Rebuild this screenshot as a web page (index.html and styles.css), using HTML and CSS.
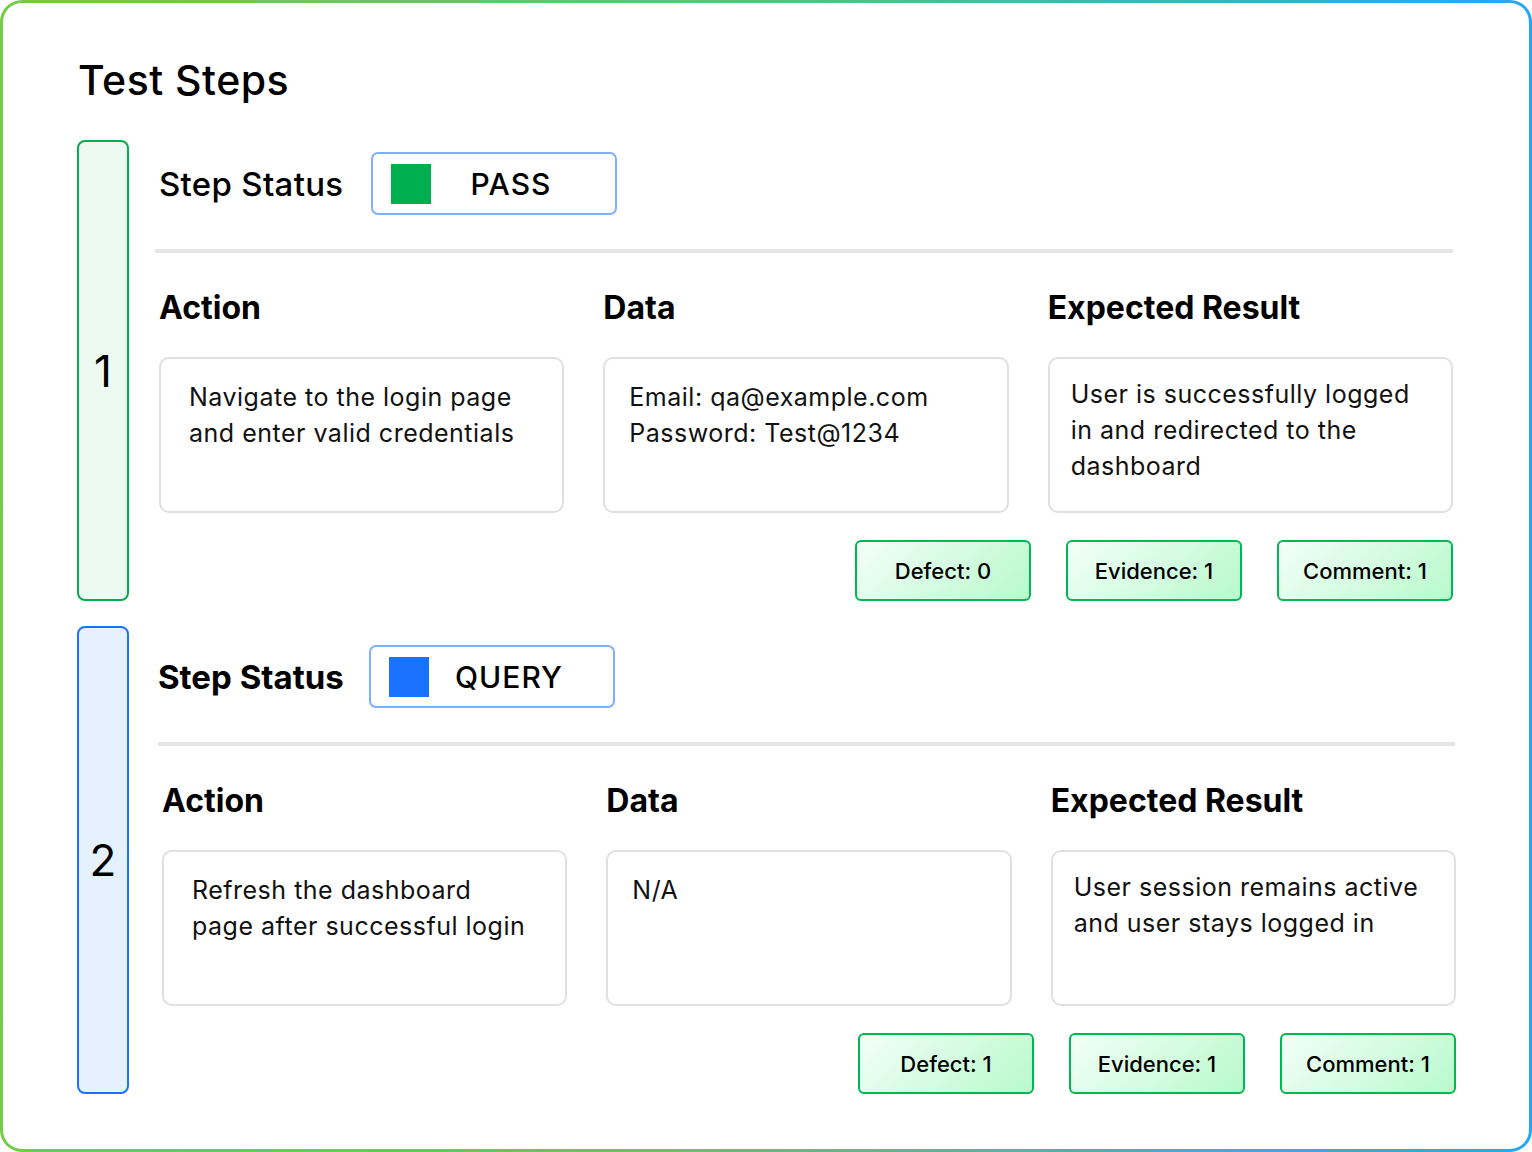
FILE: index.html
```html
<!DOCTYPE html>
<html lang="en">
<head>
    <meta charset="UTF-8">
    <meta name="viewport" content="width=device-width, initial-scale=1.0">
    <title>Test Steps</title>
    <link rel="stylesheet" href="styles.css">
</head>
<body>

    <div class="frame">
        <h1 class="title">Test Steps</h1>

        <!-- Step 1 -->
        <div class="step step-pass">
            <div class="step-num">1</div>
            <div class="step-body">
                <div class="status-row">
                    <span class="status-label">Step Status</span>
                    <div class="status-box">
                        <span class="status-swatch"></span>
                        <span class="status-text">PASS</span>
                    </div>
                </div>

                <div class="divider"></div>

                <div class="step-grid">
                    <div class="col">
                        <h3 class="col-head">Action</h3>
                        <div class="cell cell-action">Navigate to the login page<br>and enter valid credentials</div>
                    </div>
                    <div class="col">
                        <h3 class="col-head">Data</h3>
                        <div class="cell cell-data">Email: qa@example.com<br>Password: Test@1234</div>
                    </div>
                    <div class="col">
                        <h3 class="col-head">Expected Result</h3>
                        <div class="cell cell-expected">User is successfully logged<br>in and redirected to the<br>dashboard</div>
                    </div>
                </div>

                <div class="badges">
                    <span class="badge">Defect: 0</span>
                    <span class="badge">Evidence: 1</span>
                    <span class="badge">Comment: 1</span>
                </div>
            </div>
        </div>

        <!-- Step 2 -->
        <div class="step step-query">
            <div class="step-num">2</div>
            <div class="step-body">
                <div class="status-row">
                    <span class="status-label">Step Status</span>
                    <div class="status-box">
                        <span class="status-swatch"></span>
                        <span class="status-text">QUERY</span>
                    </div>
                </div>

                <div class="divider"></div>

                <div class="step-grid">
                    <div class="col">
                        <h3 class="col-head">Action</h3>
                        <div class="cell cell-action">Refresh the dashboard<br>page after successful login</div>
                    </div>
                    <div class="col">
                        <h3 class="col-head">Data</h3>
                        <div class="cell cell-data">N/A</div>
                    </div>
                    <div class="col">
                        <h3 class="col-head">Expected Result</h3>
                        <div class="cell cell-expected">User session remains active<br>and user stays logged in</div>
                    </div>
                </div>

                <div class="badges">
                    <span class="badge">Defect: 1</span>
                    <span class="badge">Evidence: 1</span>
                    <span class="badge">Comment: 1</span>
                </div>
            </div>
        </div>
    </div>

</body>
</html>
```

FILE: styles.css
```css
body {
    font-family: 'Inter', 'Noto Sans', sans-serif;
    background-color: #fff;
    color: #000;
    margin: 0;
    padding: 0;
}

.frame {
    box-sizing: border-box;
    height: 100vh;
    padding: 53px 76px 0 74px;
    border: 3px solid transparent;
    border-radius: 22px;
    background: linear-gradient(#fff, #fff) padding-box,
                linear-gradient(90deg, #74cb45 0%, #5cc27a 50%, #26a5f7 100%) border-box;
}

.title {
    margin: 0 0 36px 1px;
    font-size: 41px;
    line-height: 48px;
    font-weight: 500;
    letter-spacing: 0.5px;
}

.step {
    display: flex;
    gap: 30px;
}

.step + .step {
    margin-top: 25px;
}

.step-num {
    width: 52px;
    box-sizing: border-box;
    border: 2px solid #00b050;
    border-radius: 8px;
    background-color: #edfaf2;
    display: flex;
    align-items: center;
    justify-content: center;
    font-size: 44px;
    font-weight: 400;
}

.step-query .step-num {
    border-color: #1a73ff;
    background-color: #e6f1ff;
}

.step-body {
    flex: 1;
    padding-top: 12px;
}

.step-query .step-body {
    padding-top: 19px;
}

.status-row {
    display: flex;
    align-items: center;
    height: 63px;
}

.step-query .status-row {
    margin-left: -1px;
}

.status-label {
    width: 212px;
    font-size: 33px;
    font-weight: 500;
    letter-spacing: 0.3px;
}

.step-query .status-label {
    width: 211px;
    font-weight: 700;
    letter-spacing: 0;
}

.status-box {
    box-sizing: border-box;
    width: 246px;
    height: 63px;
    display: flex;
    align-items: center;
    padding: 0 24px 0 18px;
    border: 2px solid #7fb0ff;
    border-radius: 7px;
}

.status-swatch {
    width: 40px;
    height: 40px;
    background-color: #00b050;
}

.step-query .status-swatch {
    background-color: #1a73ff;
}

.status-text {
    flex: 1;
    text-align: center;
    font-size: 30px;
    font-weight: 500;
    letter-spacing: 1px;
}

.divider {
    height: 4px;
    margin: 34px 0 0 -4px;
    background-color: #e5e5e5;
}

.step-query .divider {
    margin-left: -1px;
    margin-right: -2px;
}

.step-grid {
    display: grid;
    grid-template-columns: repeat(3, 1fr);
    gap: 39px;
    margin-top: 35px;
}

.step-query .step-grid,
.step-query .badges {
    margin-left: 3px;
    margin-right: -3px;
}

.col-head {
    margin: 0 0 29px;
    font-size: 32px;
    line-height: 40px;
    font-weight: 700;
}

.cell {
    box-sizing: border-box;
    height: 156px;
    padding: 20px 16px 0 28px;
    border: 2px solid #e0e0e0;
    border-radius: 10px;
    font-size: 25px;
    line-height: 36px;
    letter-spacing: 0.5px;
    color: #111;
}

.cell-data {
    padding-left: 24px;
}

.cell-expected {
    padding-top: 17px;
    padding-left: 21px;
}

.badges {
    display: flex;
    justify-content: flex-end;
    gap: 35px;
    margin-top: 27px;
}

.badge {
    box-sizing: border-box;
    width: 176px;
    height: 61px;
    display: flex;
    align-items: center;
    justify-content: center;
    border: 2px solid #00b852;
    border-radius: 6px;
    background: linear-gradient(135deg, #f3fff7 0%, #b8f9cc 100%);
    font-size: 22px;
    font-weight: 500;
}
```
